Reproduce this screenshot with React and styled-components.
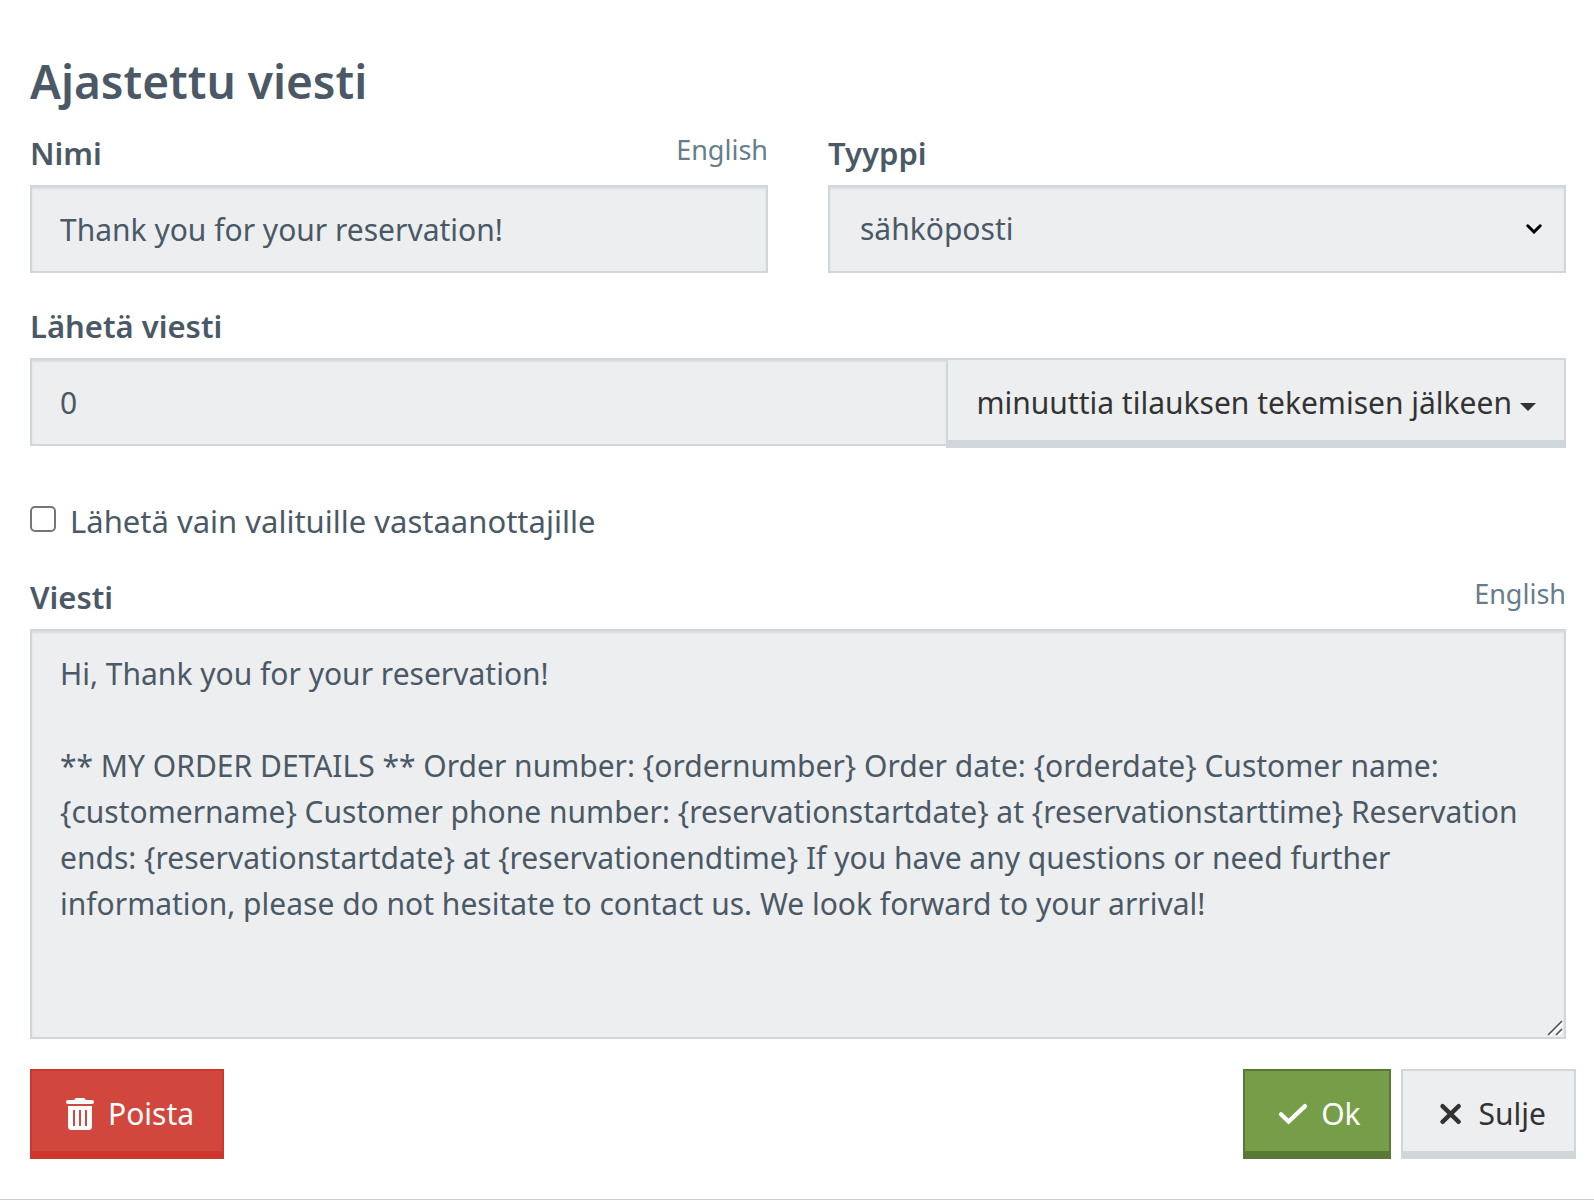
import React, { useState } from 'react';
import styled, { createGlobalStyle, css } from 'styled-components';

const color = {
  text: '#4a5965',
  muted: '#677d8a',
  dark: '#333333',
  field: '#edeef0',
  line: '#d0d7db',
};

const GlobalStyle = createGlobalStyle`
  *, *::before, *::after { box-sizing: border-box; }
  body {
    margin: 0;
    background: #ffffff;
    color: ${color.text};
    font-family: 'Noto Sans', 'Open Sans', sans-serif;
    font-size: 30px;
    font-weight: 400;
    line-height: 46px;
  }
  button, input, select, textarea { font: inherit; color: inherit; margin: 0; }
`;

const Dialog = styled.form`
  padding-bottom: 40px;
  border-bottom: 1px solid #cccccc;
`;

const Title = styled.h1`
  margin: 0;
  padding: 55px 28px 23px 30px;
  font-size: 46px;
  line-height: 52px;
  font-weight: 600;
`;

const Body = styled.div`
  display: flex;
  flex-direction: column;
  gap: 30px;
  padding: 0 28px 0 30px;
`;

const Columns = styled.div`
  display: grid;
  grid-template-columns: 1fr 1fr;
  gap: 60px;
`;

const Field = styled.div`
  display: flex;
  flex-direction: column;
  gap: 9px;
  min-width: 0;
`;

const FieldHeader = styled.div`
  display: flex;
  justify-content: space-between;
  align-items: flex-start;
`;

const Label = styled.label`
  font-size: 31px;
  font-weight: 600;
`;

const Language = styled.span`
  color: ${color.muted};
  font-size: 27px;
  line-height: 40px;
`;

const control = css`
  display: block;
  width: 100%;
  border: 2px solid ${color.line};
  border-radius: 0;
  background: ${color.field};
  box-shadow: inset 0 2px 2px rgba(0, 0, 0, 0.075);
  outline: none;
`;

const Input = styled.input`
  ${control}
  height: 88px;
  padding: 19px 28px;
`;

const ControlWrap = styled.div`
  position: relative;
`;

const Select = styled.select`
  ${control}
  appearance: none;
  height: 88px;
  padding: 19px 60px 19px 30px;
`;

const Chevron = styled.svg`
  position: absolute;
  top: 39px;
  right: 24px;
  width: 16px;
  height: 10px;
  pointer-events: none;
`;

const TextArea = styled.textarea`
  ${control}
  padding: 20px 28px 18px;
  resize: none;
`;

const Grip = styled.svg`
  position: absolute;
  right: 3px;
  bottom: 3px;
  width: 16px;
  height: 16px;
  pointer-events: none;
`;

const InputGroup = styled.div`
  display: flex;
  align-items: flex-start;
  margin-bottom: 20px;

  ${Input} {
    flex: 1;
    min-width: 0;
    border-right: 0;
  }
`;

const tones = {
  plain: css`
    color: ${color.dark};
    background: ${color.field};
    border-color: ${color.line};
  `,
  danger: css`
    color: #ffffff;
    background: #d1473e;
    border-color: #cf372c;
  `,
  success: css`
    color: #ffffff;
    background: #769e49;
    border-color: #587a34;
  `,
};

const Button = styled.button`
  display: inline-flex;
  align-items: center;
  gap: 8px;
  padding: 20px 28px 14px;
  border: 2px solid;
  border-bottom-width: 8px;
  border-radius: 0;
  white-space: nowrap;
  cursor: pointer;
  ${(p) => tones[p.$tone || 'plain']}
`;

const Caret = styled.span`
  margin-top: 8px;
  border: 8px solid transparent;
  border-top-color: currentColor;
  border-bottom: 0;
`;

const CheckLabel = styled.label`
  display: flex;
  align-items: flex-start;
  gap: 14px;
  font-size: 31px;
`;

const Checkbox = styled.input`
  appearance: none;
  flex: none;
  width: 26px;
  height: 26px;
  margin: 8px 0 0;
  border: 2px solid #767676;
  border-radius: 5px;
  background: #ffffff;

  &:checked {
    background: #767676;
    box-shadow: inset 0 0 0 4px #ffffff;
  }
`;

const Footer = styled.div`
  display: flex;
  justify-content: space-between;
  padding: 30px 18px 0 30px;
`;

const Actions = styled.div`
  display: flex;
  gap: 10px;
`;

const Icon = styled.svg`
  width: 40px;
  height: 32px;
  fill: none;
  stroke: currentColor;
  stroke-linecap: round;
`;

const TrashIcon = () => (
  <Icon viewBox="0 0 40 32" aria-hidden="true">
    <g fill="currentColor" stroke="none">
      <path d="M8 2h6l1-1.3Q15.500 0 16.500 0h7Q24.500 0 25 .7L26 2h6a2 2 0 0 1 0 4H8a2 2 0 0 1 0-4z" />
      <path
        fillRule="evenodd"
        d="M8 8h24v20.500a3.500 3.500 0 0 1-3.500 3.500h-17A3.500 3.500 0 0 1 8 28.500zM13 12v16h2V12zM19 12v16h2V12zM25 12v16h2V12z"
      />
    </g>
  </Icon>
);

const CheckIcon = () => (
  <Icon viewBox="0 0 40 32" strokeWidth="4.200" aria-hidden="true">
    <path d="M8 16.300l7.600 7.300L32 8.100" />
  </Icon>
);

const CloseIcon = () => (
  <Icon viewBox="0 0 40 32" strokeWidth="4.400" aria-hidden="true">
    <path d="M11.500 8.200l16.200 15.600M27.700 8.200L11.500 23.800" />
  </Icon>
);

const defaultMessage = [
  'Hi, Thank you for your reservation!',
  '',
  '** MY ORDER DETAILS ** Order number: {ordernumber} Order date: {orderdate} Customer name: {customername} Customer phone number: {reservationstartdate} at {reservationstarttime} Reservation ends: {reservationstartdate} at {reservationendtime} If you have any questions or need further information, please do not hesitate to contact us. We look forward to your arrival!',
].join('\n');

export default function App() {
  const [name, setName] = useState('Thank you for your reservation!');
  const [delay, setDelay] = useState('0');
  const [message, setMessage] = useState(defaultMessage);
  const [selectedOnly, setSelectedOnly] = useState(false);

  return (
    <>
      <GlobalStyle />
      <Dialog onSubmit={(e) => e.preventDefault()}>
        <Title>Ajastettu viesti</Title>
        <Body>
          <Columns>
            <Field>
              <FieldHeader>
                <Label htmlFor="name">Nimi</Label>
                <Language>English</Language>
              </FieldHeader>
              <Input id="name" type="text" value={name} onChange={(e) => setName(e.target.value)} />
            </Field>
            <Field>
              <FieldHeader>
                <Label htmlFor="type">Tyyppi</Label>
              </FieldHeader>
              <ControlWrap>
                <Select id="type" defaultValue="email">
                  <option value="email">sähköposti</option>
                </Select>
                <Chevron viewBox="0 0 16 10" aria-hidden="true">
                  <path d="M1.800 1.800L8 8l6.200-6.200" fill="none" stroke="#000000" strokeWidth="3" strokeLinecap="round" />
                </Chevron>
              </ControlWrap>
            </Field>
          </Columns>

          <Field>
            <FieldHeader>
              <Label htmlFor="delay">Lähetä viesti</Label>
            </FieldHeader>
            <InputGroup>
              <Input id="delay" type="text" value={delay} onChange={(e) => setDelay(e.target.value)} />
              <Button type="button" aria-haspopup="menu">
                minuuttia tilauksen tekemisen jälkeen
                <Caret />
              </Button>
            </InputGroup>
          </Field>

          <CheckLabel>
            <Checkbox
              type="checkbox"
              checked={selectedOnly}
              onChange={(e) => setSelectedOnly(e.target.checked)}
            />
            Lähetä vain valituille vastaanottajille
          </CheckLabel>

          <Field>
            <FieldHeader>
              <Label htmlFor="message">Viesti</Label>
              <Language>English</Language>
            </FieldHeader>
            <ControlWrap>
              <TextArea
                id="message"
                rows={8}
                spellCheck={false}
                value={message}
                onChange={(e) => setMessage(e.target.value)}
              />
              <Grip viewBox="0 0 16 16" aria-hidden="true">
                <path d="M3 16L16 3M11 16l5-5" stroke="#ffffff" strokeWidth="1.500" />
                <path d="M1 15L15 1M9 15l6-6" stroke="#4d4d4d" strokeWidth="1.500" />
              </Grip>
            </ControlWrap>
          </Field>
        </Body>

        <Footer>
          <Button type="button" $tone="danger">
            <TrashIcon />
            Poista
          </Button>
          <Actions>
            <Button type="submit" $tone="success">
              <CheckIcon />
              Ok
            </Button>
            <Button type="button">
              <CloseIcon />
              Sulje
            </Button>
          </Actions>
        </Footer>
      </Dialog>
    </>
  );
}
